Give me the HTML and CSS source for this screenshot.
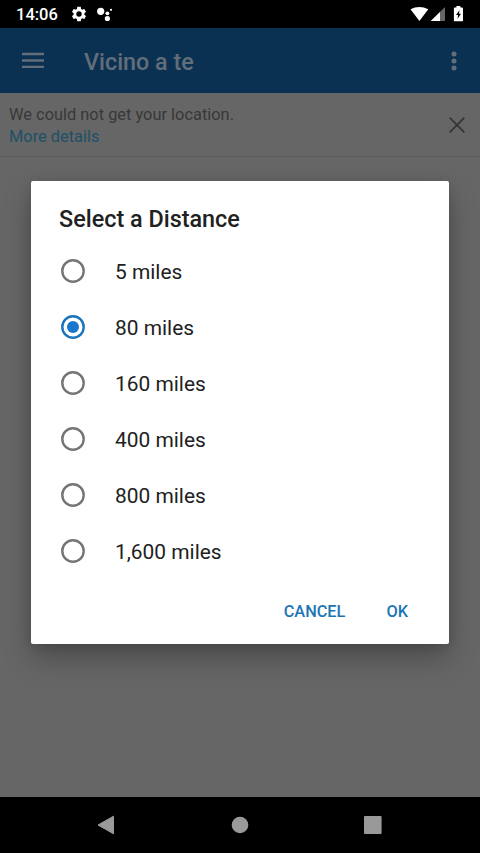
FILE: index.html
```html
<!DOCTYPE html>
<html lang="it">
<head>
<meta charset="utf-8">
<title>Vicino a te</title>
<link rel="stylesheet" href="styles.css">
</head>
<body>
<div class="screen">
  <header class="status">
    <span class="clock">14:06</span>
    <svg class="gear" width="18" height="18" viewBox="0 0 24 24"><path fill="#fff" d="M19.14 12.94c.04-.3.06-.61.06-.94 0-.32-.02-.64-.07-.94l2.03-1.58a.49.49 0 0 0 .12-.61l-1.92-3.32a.49.49 0 0 0-.59-.22l-2.39.96a7 7 0 0 0-1.62-.94l-.36-2.54a.48.48 0 0 0-.48-.41h-3.84a.47.47 0 0 0-.47.41l-.36 2.54c-.59.24-1.13.57-1.62.94l-2.39-.96a.48.48 0 0 0-.59.22L2.74 8.87a.47.47 0 0 0 .12.61l2.03 1.58a6 6 0 0 0-.02 1.88l-2.03 1.58a.49.49 0 0 0-.12.61l1.92 3.32c.12.22.37.29.59.22l2.39-.96c.5.38 1.03.7 1.62.94l.36 2.54c.05.24.24.41.48.41h3.84c.24 0 .44-.17.47-.41l.36-2.54a7 7 0 0 0 1.62-.94l2.39.96c.22.08.47 0 .59-.22l1.92-3.32a.47.47 0 0 0-.12-.61zM12 15.6a3.6 3.6 0 1 1 0-7.2 3.6 3.6 0 0 1 0 7.2z"/></svg>
    <svg class="assistant" width="18" height="16" viewBox="0 0 18 16"><g fill="#fff"><circle cx="4.7" cy="5.3" r="3.6"/><circle cx="11.4" cy="7.3" r="1.9"/><circle cx="11.4" cy="12.5" r="2.6"/><circle cx="15" cy="3.8" r="1.1"/></g></svg>
    <svg class="radio-signal" width="56" height="18" viewBox="0 0 56 18"><path fill="#fff" d="M.5 4.300Q9.300-.5 18.300 4.300L9.400 16z"/><path fill="#666" d="M35 2v14H20.800z"/><path fill="#fff" d="M30 7v9h-9.200z"/><path fill="#fff" d="M46.400 1h4v1.500h1.700q.9 0 .9.900v12q0 .9-.9.900h-7.300q-.9 0-.9-.9v-12q0-.9.900-.9h1.600z"/><path fill="#000" d="M49.600 5l-3.600 5h2.100l-.6 3.900 3.500-5.200h-2.100z"/></svg>
  </header>
  <div class="toolbar">
    <svg class="menu" width="22" height="17" viewBox="0 0 22 17"><path stroke="#626e79" stroke-width="2.3" d="M0 2h22M0 8.500h22M0 14.800h22"/></svg>
    <h1>Vicino a te</h1>
    <svg class="more" width="6" height="20" viewBox="0 0 6 20"><g fill="#626e79"><circle cx="3" cy="3" r="2.500"/><circle cx="3" cy="10" r="2.500"/><circle cx="3" cy="17" r="2.500"/></g></svg>
  </div>
  <section class="notice">
    <div class="message">
      <div>We could not get your location.</div>
      <div class="link">More details</div>
    </div>
    <svg width="16" height="16" viewBox="0 0 16 16"><path stroke="#363636" stroke-width="1.900" d="M.7.7l14.600 14.600M15.300.7L.7 15.300"/></svg>
  </section>
  <main class="content">
    <div class="dialog">
      <h2>Select a Distance</h2>
      <div class="option"><svg class="radio" width="24" height="24"><circle cx="12" cy="12" r="10.700"/></svg>5 miles</div>
      <div class="option"><svg class="radio checked" width="24" height="24"><circle cx="12" cy="12" r="10.700"/><circle class="dot" cx="12" cy="12" r="6"/></svg>80 miles</div>
      <div class="option"><svg class="radio" width="24" height="24"><circle cx="12" cy="12" r="10.700"/></svg>160 miles</div>
      <div class="option"><svg class="radio" width="24" height="24"><circle cx="12" cy="12" r="10.700"/></svg>400 miles</div>
      <div class="option"><svg class="radio" width="24" height="24"><circle cx="12" cy="12" r="10.700"/></svg>800 miles</div>
      <div class="option"><svg class="radio" width="24" height="24"><circle cx="12" cy="12" r="10.700"/></svg>1,600 miles</div>
      <div class="actions"><span>CANCEL</span><span>OK</span></div>
    </div>
  </main>
  <nav class="navbar">
    <svg width="18" height="20" viewBox="0 0 18 20"><path fill="#999" stroke="#999" stroke-linejoin="round" d="M1 10L16.500 1.200v17.600z"/></svg>
    <svg width="18" height="18" viewBox="0 0 18 18"><circle cx="9" cy="9" r="8.300" fill="#999"/></svg>
    <svg width="18" height="18" viewBox="0 0 18 18"><rect width="17.600" height="18" rx="1" fill="#999"/></svg>
  </nav>
</div>
</body>
</html>
```
FILE: styles.css
```css
* { box-sizing: border-box; }
body { margin: 0; font-family: Roboto, sans-serif; }
svg { display: block; flex: none; }
h1, h2 { margin: 0; font-weight: 500; }
.screen { width: 480px; height: 853px; display: flex; flex-direction: column; background: #666; overflow: hidden; }
.status { height: 28px; background: #000; display: flex; align-items: center; padding: 0 16px; color: #fff; }
.clock { font-size: 16.5px; font-weight: 500; width: 42px; line-height: 20px; padding-top: 1px; }
.gear { margin-left: 12px; }
.assistant { margin-left: 8px; }
.radio-signal { margin-left: auto; margin-right: -2px; }
.toolbar { height: 65px; background: #0b3152; display: flex; align-items: center; padding: 2px 23px 0 22px; }
.toolbar h1 { margin-left: 40px; font-size: 23.3px; line-height: 28px; color: #626e79; }
.menu { margin-top: -2px; }
.more { margin-left: auto; margin-top: -2px; }
.notice { height: 64px; border-bottom: 1px solid #5c5c5c; display: flex; justify-content: space-between; align-items: center; padding: 1px 15px 0 9px; font-size: 16.4px; line-height: 22px; color: #383838; }
.message { padding-top: 2px; }
.link { color: #1e5068; }
.content { flex: 1; padding: 24px 31px 0; }
.dialog { height: 463px; background: #fff; border-radius: 2px; box-shadow: 0 14px 28px rgba(0,0,0,.26), 0 2px 12px rgba(0,0,0,.12); padding-top: 24px; color: #212121; }
.dialog h2 { font-size: 23.4px; line-height: 28px; margin: 0 0 11px 28px; }
.option { height: 56px; display: flex; align-items: center; padding-left: 30px; font-size: 20.9px; }
.radio { margin: -3px 30px 0 0; fill: none; stroke: #757575; stroke-width: 2.4px; }
.checked { stroke: #1c75bc; }
.dot { fill: #1976cc; stroke: none; }
.actions { display: flex; justify-content: flex-end; gap: 41px; padding: 21px 41px 0 0; font-size: 16.33px; font-weight: 500; line-height: 22px; color: #1c75b5; }
.navbar { height: 56px; background: #000; display: flex; justify-content: space-between; align-items: center; padding: 0 98px 0 97px; }
```
